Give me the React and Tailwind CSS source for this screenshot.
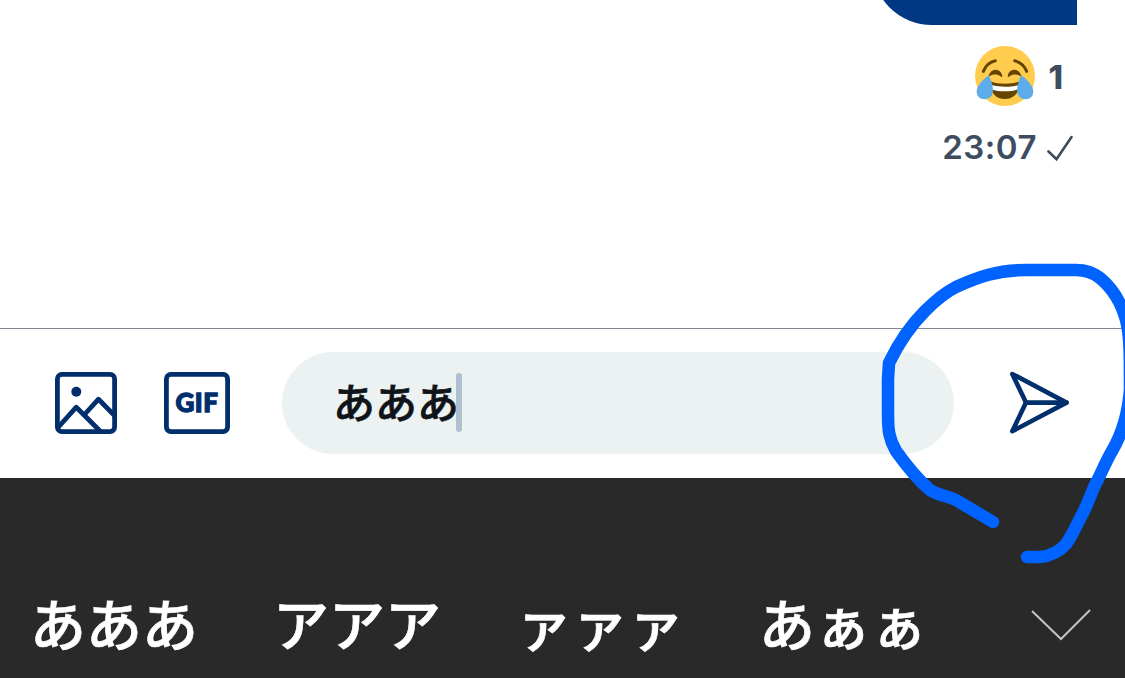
const candidates = ["あああ", "アアア", "ァァァ", "あぁぁ"];

function JoyEmoji() {
  return (
    <svg className="size-[60px]" viewBox="0 0 36 36" fill="none">
      <circle cx="18" cy="18" r="18" fill="#FFCC4D" />
      <g stroke="#664500" strokeLinecap="round">
        <path d="M5 15.2C6.2 12.2 8.8 9.7 12.2 8.9" strokeWidth="1.8" />
        <path d="M31 15.2C29.8 12.2 27.2 9.7 23.8 8.9" strokeWidth="1.8" />
      </g>
      <path
        d="M8.2 17.8C8.8 15.8 10.4 14.2 12.4 14.2C14.5 14.2 16 15.9 16.4 18C16.4 18.6 15.8 18.7 15.4 18.3C13.2 16.6 10.6 16.8 8.6 18.2Z"
        fill="#664500"
      />
      <path
        d="M27.8 17.8C27.2 15.8 25.6 14.2 23.6 14.2C21.5 14.2 20 15.9 19.6 18C19.6 18.6 20.2 18.7 20.6 18.3C22.8 16.6 25.4 16.8 27.4 18.2Z"
        fill="#664500"
      />
      <path
        d="M9.3 21.3C12 22.3 15 22.6 18 22.6C21 22.6 24 22.3 26.7 21.3C27.2 27.5 23.6 31.8 18 31.8C12.4 31.8 8.8 27.5 9.3 21.3Z"
        fill="#664500"
      />
      <path
        d="M9.8 23.4C12.3 24.2 15.2 24.4 18 24.4C20.8 24.4 23.7 24.2 26.2 23.4V25.8C23.8 27 21 27.2 18 27.2C15 27.2 12.2 27 9.8 25.8Z"
        fill="#fff"
      />
      <path
        d="M8.4 17.4C9.2 20 10.8 23.4 10.8 26.6C10.8 29.8 8.8 31.9 5.8 31.9C2.8 31.9 1 29.8 1 27.4C1 23.6 5 20 8.4 17.4Z"
        fill="#5DADEC"
      />
      <path
        d="M27.6 17.4C26.8 20 25.2 23.4 25.2 26.6C25.2 29.8 27.2 31.9 30.2 31.9C33.2 31.9 35 29.8 35 27.4C35 23.6 31 20 27.6 17.4Z"
        fill="#5DADEC"
      />
    </svg>
  );
}

function ImageIcon() {
  return (
    <svg
      className="h-[62px] w-[62px]"
      viewBox="0 0 62 62"
      fill="none"
      stroke="#002F6C"
      strokeWidth="4.8"
    >
      <rect x="2.4" y="2.4" width="57.2" height="57.2" rx="4.5" />
      <path d="M3 55.5L21.3 35.2L46 60" strokeLinejoin="round" />
      <path d="M29.5 42.5L43.5 27.2L59.5 43.5" strokeLinejoin="round" />
      <circle cx="21.3" cy="19.8" r="5" fill="#002F6C" stroke="none" />
    </svg>
  );
}

function GifIcon() {
  return (
    <div className="relative h-[62px] w-[66px]">
      <svg
        className="h-[62px] w-[66px]"
        viewBox="0 0 66 62"
        fill="none"
        stroke="#002F6C"
        strokeWidth="4.8"
      >
        <rect x="2.4" y="2.4" width="61.2" height="57.2" rx="4.5" />
      </svg>
      <span className="absolute inset-0 flex items-center justify-center pb-[3px] font-[Lato] text-[26px] leading-none font-black tracking-[0.5px] text-[#002F6C] [-webkit-text-stroke:1.3px_#002F6C]">
        GIF
      </span>
    </div>
  );
}

function SendIcon() {
  return (
    <svg
      className="h-[64px] w-[62px]"
      viewBox="0 0 62 64"
      fill="none"
      stroke="#002F6C"
      strokeWidth="4.6"
      strokeLinecap="round"
      strokeLinejoin="round"
    >
      <path d="M3.3 3L57.5 31.6L3.3 60.2L17 31.6Z" />
      <path d="M17 31.6H57.5" />
    </svg>
  );
}

export default function App() {
  return (
    <div className="relative flex h-[678px] w-[1125px] flex-col overflow-hidden bg-white font-[Inter,'Noto_Sans_CJK_JP',sans-serif]">
      <main className="flex h-[328px] flex-col items-end pr-12 text-[#3D4D5F]">
        <div className="-mt-[55px] h-20 w-[205px] shrink-0 rounded-bl-[60px] bg-[#003883]" />
        <div className="mt-[21px] mr-[14px] flex h-[60px] items-center gap-[13px]">
          <JoyEmoji />
          <span className="mt-0.5 text-[33px] leading-none font-extrabold">1</span>
        </div>
        <div className="mt-6 mr-1 flex h-9 items-center gap-2.5">
          <span className="-mt-px text-[33px] leading-none font-semibold tracking-[0.5px]">
            23:07
          </span>
          <svg
            className="h-[26px] w-[26px]"
            viewBox="0 0 26 26"
            fill="none"
            stroke="#3D4D5F"
            strokeWidth="2.6"
            strokeLinecap="round"
          >
            <path d="M1.5 16.5L9.5 24.2L24.5 2" />
          </svg>
        </div>
      </main>

      <div className="flex h-[150px] items-center border-t border-[#80868F] pr-[54px] pb-px pl-[55px]">
        <ImageIcon />
        <div className="ml-[47px]">
          <GifIcon />
        </div>
        <div className="ml-[52px] flex h-[102px] w-[672px] items-center rounded-full bg-[#ECF2F2] pl-[51px]">
          <span className="mt-0.5 text-[42px] leading-none font-medium text-[#0F1419] [-webkit-text-stroke:0.7px_#0F1419]">
            あああ
          </span>
          <span className="-mt-px -ml-[3px] h-[59px] w-1.5 rounded-full bg-[#AFC1D1]" />
        </div>
        <div className="ml-auto">
          <SendIcon />
        </div>
      </div>

      <div className="flex h-[200px] items-end bg-[#292929] pb-6 pl-[30px] text-[56px] leading-none font-medium text-white [-webkit-text-stroke:0.7px_white]">
        {candidates.map((text) => (
          <span key={text} className="mr-[75px] w-[168px] shrink-0">
            {text}
          </span>
        ))}
        <svg
          className="mb-[13px] ml-[29px] h-8 w-[60px] shrink-0"
          viewBox="0 0 60 32"
          fill="none"
          stroke="#C4C4C4"
          strokeWidth="2"
        >
          <path d="M1 2L30 30L59 1" />
        </svg>
      </div>

      {/* pen stroke around the send button */}
      <svg
        className="pointer-events-none absolute inset-0"
        width="1125"
        height="678"
        viewBox="0 0 1125 678"
        fill="none"
        stroke="#0062FF"
        strokeWidth="12.5"
        strokeLinecap="round"
        strokeLinejoin="round"
      >
        <path d="M993 522L956 500C946 495 939 496 930 490C917 479 906 465 896 451C889 439 888 430 888 414V379L889 363C900 340 912 324 925 311C937 299 946 292 956 287C978 277 997 270 1027 270H1076C1086 270 1095 274 1100 278C1112 288 1121 301 1126 320C1130 335 1130 355 1130 390C1128 415 1122 434 1112 451C1105 463 1101 474 1095 485C1091 494 1088 503 1083 513C1077 524 1072 536 1066 544C1060 551 1050 556 1040 557H1027" />
      </svg>
    </div>
  );
}
